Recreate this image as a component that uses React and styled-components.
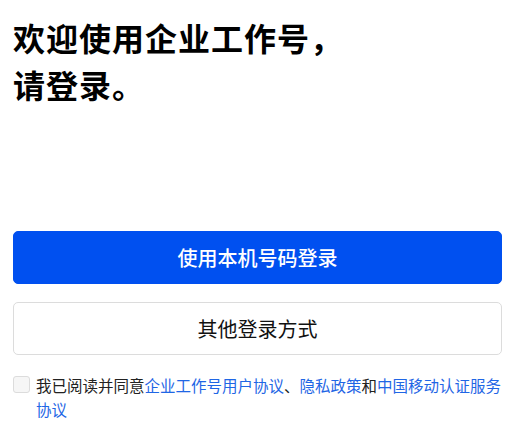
import React from 'react';
import styled, { createGlobalStyle } from 'styled-components';

const GlobalStyle = createGlobalStyle`
  html, body {
    margin: 0;
    padding: 0;
    background: #fff;
  }
  body {
    font-family: "Noto Sans CJK SC", "Noto Sans", sans-serif;
    color: #111;
  }
`;

const Page = styled.div`
  display: flex;
  flex-direction: column;
  padding: 0 9px 0 13px;
  height: 426px;
  box-sizing: border-box;
`;

const Title = styled.h1`
  margin: 14px 0 0 0;
  font-size: 32px;
  line-height: 47px;
  letter-spacing: 1px;
  font-weight: 700;
  color: #000;
`;

const Actions = styled.div`
  display: flex;
  flex-direction: column;
  gap: 18px;
  margin-top: 123px;
`;

const Button = styled.button`
  display: flex;
  align-items: center;
  justify-content: center;
  height: 53px;
  width: 100%;
  border-radius: 5px;
  font-family: inherit;
  font-size: 20px;
  cursor: pointer;
  border: 1px solid ${(p) => (p.$primary ? '#0050f0' : '#dcdcdc')};
  background: ${(p) => (p.$primary ? '#0050f0' : '#fff')};
  color: ${(p) => (p.$primary ? '#fff' : '#111')};
  font-weight: ${(p) => (p.$primary ? 500 : 400)};
`;

const Agreement = styled.label`
  display: flex;
  align-items: flex-start;
  gap: 6px;
  margin-top: 18px;
  font-size: 15.5px;
  line-height: 24px;
  color: #222;
`;

const Box = styled.span`
  flex: none;
  width: 17px;
  height: 17px;
  margin-top: 3px;
  box-sizing: border-box;
  border: 1px solid #dcdcdc;
  border-radius: 3px;
  background: #f6f6f6;
`;

const Text = styled.span`
  flex: 1;
`;

const Link = styled.a`
  color: #1f66e5;
  text-decoration: none;
`;

export default function App() {
  return (
    <>
      <GlobalStyle />
      <Page>
        <Title>
          欢迎使用企业工作号，
          <br />
          请登录。
        </Title>
        <Actions>
          <Button $primary>使用本机号码登录</Button>
          <Button>其他登录方式</Button>
        </Actions>
        <Agreement>
          <Box />
          <Text>
            我已阅读并同意<Link href="#">企业工作号用户协议</Link>、<Link href="#">隐私政策</Link>和<Link href="#">中国移动认证服务协议</Link>
          </Text>
        </Agreement>
      </Page>
    </>
  );
}
